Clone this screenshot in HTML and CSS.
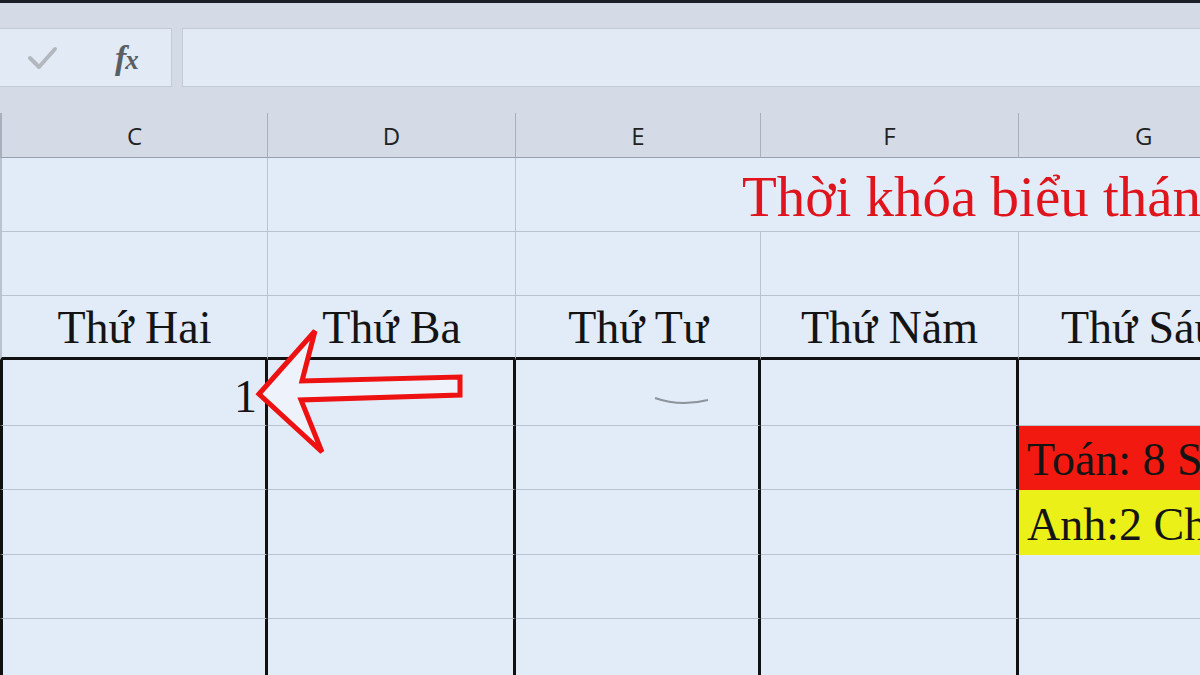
FILE: index.html
```html
<!DOCTYPE HTML>
<html>
    <head>
        <meta http-equiv="Content-Type" content="text/html; charset=UTF-8" />
        <title>Thời khóa biểu</title>
        <link rel="stylesheet" href="styles.css">
    </head>
    <body>
        <div class="topline"></div>
        <div class="toolbar">
            <div class="formula">
                <div class="fx-box">
                    <svg class="check" width="32" height="28" viewBox="0 0 32 28">
                        <polyline points="3,13 12,22 28,4" fill="none" stroke="#b3b8bf" stroke-width="4" stroke-linecap="round" stroke-linejoin="round"/>
                    </svg>
                    <span class="fx">f<span class="x">x</span></span>
                </div>
                <div class="input-box"></div>
            </div>
        </div>

        <div class="sheet">
            <div class="row head">
                <div class="cell c">C</div>
                <div class="cell d">D</div>
                <div class="cell e">E</div>
                <div class="cell f">F</div>
                <div class="cell g">G</div>
            </div>
            <div class="row r-title">
                <div class="cell c"></div>
                <div class="cell d"></div>
                <div class="cell merge"><span class="title">Thời khóa biểu tháng</span></div>
            </div>
            <div class="row r-blank">
                <div class="cell c"></div>
                <div class="cell d"></div>
                <div class="cell e"></div>
                <div class="cell f"></div>
                <div class="cell g"></div>
            </div>
            <div class="row r-days">
                <div class="cell c">Thứ Hai</div>
                <div class="cell d">Thứ Ba</div>
                <div class="cell e">Thứ Tư</div>
                <div class="cell f">Thứ Năm</div>
                <div class="cell g">Thứ Sáu</div>
            </div>
            <div class="row r-body h66">
                <div class="cell c num">1</div>
                <div class="cell d"></div>
                <div class="cell e"></div>
                <div class="cell f"></div>
                <div class="cell g"></div>
            </div>
            <div class="row r-body h64">
                <div class="cell c"></div>
                <div class="cell d"></div>
                <div class="cell e"></div>
                <div class="cell f"></div>
                <div class="cell g red">Toán: 8 Sách</div>
            </div>
            <div class="row r-body h65">
                <div class="cell c"></div>
                <div class="cell d"></div>
                <div class="cell e"></div>
                <div class="cell f"></div>
                <div class="cell g yellow">Anh:2 Chương</div>
            </div>
            <div class="row r-body h64">
                <div class="cell c"></div>
                <div class="cell d"></div>
                <div class="cell e"></div>
                <div class="cell f"></div>
                <div class="cell g"></div>
            </div>
            <div class="row r-body h64">
                <div class="cell c"></div>
                <div class="cell d"></div>
                <div class="cell e"></div>
                <div class="cell f"></div>
                <div class="cell g"></div>
            </div>
        </div>

        <svg class="overlay" width="1200" height="675" viewBox="0 0 1200 675">
            <path d="M655 398 Q680 407 708 400" fill="none" stroke="#8d939b" stroke-width="2"/>
            <polygon points="259,394 315,331 302,381 460,377 460,395 301,400 322,452"
                     fill="#eef3fb" stroke="#ee1111" stroke-width="5" stroke-linejoin="miter"/>
        </svg>
    </body>
</html>
```

FILE: styles.css
```css
* {
    box-sizing: border-box;
}

body {
    margin: 0;
    width: 1200px;
    height: 675px;
    overflow: hidden;
    position: relative;
    background: #d4dbe6;
    font-family: "Liberation Serif", serif;
}

.topline {
    height: 3px;
    background: #1b2028;
}

.toolbar {
    padding-top: 25px;
    height: 110px;
}

.formula {
    display: flex;
    gap: 10px;
    height: 59px;
}

.fx-box {
    width: 172px;
    background: #e2eaf6;
    border: 1px solid #c3cbd6;
    border-left: none;
    display: flex;
    align-items: center;
    padding-left: 27px;
}

.check {
    margin-top: 3px;
}

.fx {
    margin-left: 56px;
    font-family: "Liberation Serif", serif;
    font-style: italic;
    font-weight: bold;
    font-size: 34px;
    color: #5a5d62;
    letter-spacing: -1px;
}

.fx .x {
    font-size: 27px;
}

.input-box {
    flex: 1;
    background: #e2eaf6;
    border: 1px solid #c3cbd6;
    border-right: none;
}

.sheet {
    display: flex;
    flex-direction: column;
}

.row {
    display: flex;
}

.cell {
    flex: none;
    border-right: 1px solid #b9c3d0;
    border-bottom: 1px solid #b9c3d0;
    background: #e2ecf9;
    display: flex;
    align-items: flex-end;
    justify-content: center;
    font-size: 46px;
    color: #141414;
    white-space: nowrap;
    overflow: hidden;
}

.cell:first-child {
    border-left: 2px solid #b9c3d0;
}

.c { width: 268px; }
.d { width: 248px; }
.e { width: 245px; }
.f { width: 258px; }
.g { width: 181px; border-right: none; }
.merge { width: 684px; border-right: none; }

.head {
    height: 45px;
}

.head .cell {
    background: #d4dbe6;
    border-right-color: #a7b0bc;
    border-bottom-color: #97a1ad;
    align-items: center;
    font-family: "Open Sans", "Liberation Sans", sans-serif;
    font-size: 24px;
    color: #222;
    padding-top: 1px;
}

.head .g {
    justify-content: flex-start;
    padding-left: 116px;
}

.head .cell:first-child {
    border-left-color: #a7b0bc;
}

.r-title {
    height: 74px;
}

.r-title .merge {
    justify-content: flex-start;
    padding-left: 226px;
    padding-bottom: 2px;
}

.title {
    font-size: 57px;
    color: #e0141c;
}

.r-blank {
    height: 64px;
}

.r-days {
    height: 64px;
}

.r-days .cell {
    border-bottom: 3px solid #111;
    padding-bottom: 3px;
}

.r-days .g {
    justify-content: flex-start;
    padding-left: 42px;
}

.r-body .cell {
    border-right: 3px solid #111;
    align-items: center;
}

.r-body .cell:first-child {
    border-left: 3px solid #111;
}

.r-body .g {
    border-right: none;
    justify-content: flex-start;
    padding-left: 8px;
    padding-top: 4px;
}

.h66 { height: 66px; }
.h64 { height: 64px; }
.h65 { height: 65px; }

.num {
    justify-content: flex-end;
    padding-right: 8px;
    padding-top: 8px;
}

.red {
    background: #f21a10;
    border-bottom-color: #f21a10;
}

.yellow {
    background: #ecf019;
    border-bottom-color: #ecf019;
}

.overlay {
    position: absolute;
    top: 0;
    left: 0;
    pointer-events: none;
}
```
